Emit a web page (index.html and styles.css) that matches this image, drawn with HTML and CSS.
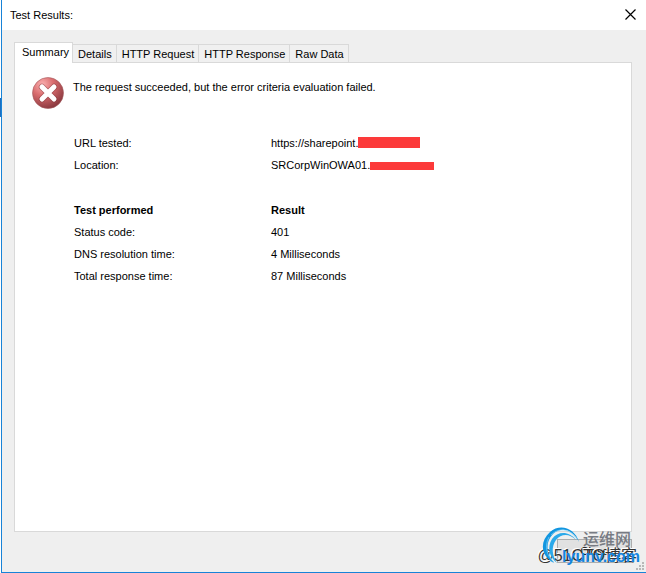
FILE: index.html
```html
<!DOCTYPE html>
<html lang="en">
  <head>
    <meta charset="utf-8">
    <title>Test Results</title>
    <link rel="stylesheet" href="styles.css">
  </head>
  <body>
    <div class="window">
      <div class="title-bar">
        <h1>Test Results:</h1>
        <button class="close-x" aria-label="Close window">
          <svg width="11" height="11" viewBox="0 0 11 11"><path d="M.5 .5l10 10M10.5 .5l-10 10" stroke="#000" stroke-width="1.2"/></svg>
        </button>
      </div>

      <div class="content">
        <div class="tabs" role="tablist">
          <button class="tab active" role="tab" aria-selected="true">Summary</button>
          <button class="tab" role="tab">Details</button>
          <button class="tab" role="tab">HTTP Request</button>
          <button class="tab" role="tab">HTTP Response</button>
          <button class="tab" role="tab">Raw Data</button>
        </div>

        <div class="panel" role="tabpanel">
          <div class="message">
            <svg width="32" height="32" viewBox="0 0 32 32">
              <defs>
                <radialGradient id="ball" cx="32%" cy="22%" r="80%">
                  <stop offset="0" stop-color="#fbb0b0"/>
                  <stop offset=".45" stop-color="#d96c6e"/>
                  <stop offset="1" stop-color="#8c3a40"/>
                </radialGradient>
              </defs>
              <circle cx="16" cy="16" r="15.5" fill="url(#ball)" stroke="#a45a5e" stroke-width=".6"/>
              <path d="M10 10l12 12M22 10l-12 12" stroke="#7d3035" stroke-opacity=".5" stroke-width="6.5" stroke-linecap="round"/>
              <path d="M10 10l12 12M22 10l-12 12" stroke="#fff" stroke-width="5" stroke-linecap="round"/>
            </svg>
            <p>The request succeeded, but the error criteria evaluation failed.</p>
          </div>

          <table class="results">
            <tr><td>URL tested:</td><td>https://sharepoint.<span class="redacted url"></span></td></tr>
            <tr><td>Location:</td><td>SRCorpWinOWA01.<span class="redacted location"></span></td></tr>
            <tr class="heading"><th>Test performed</th><th>Result</th></tr>
            <tr><td>Status code:</td><td>401</td></tr>
            <tr><td>DNS resolution time:</td><td>4 Milliseconds</td></tr>
            <tr><td>Total response time:</td><td>87 Milliseconds</td></tr>
          </table>
        </div>
      </div>

      <div class="footer">
        <button class="close-button">Close</button>
      </div>

      <svg class="grip" width="9" height="9" viewBox="0 0 9 9" fill="#b8b8b8">
        <path d="M6 0h2v2h-2zM3 3h2v2h-2zM6 3h2v2h-2zM0 6h2v2h-2zM3 6h2v2h-2zM6 6h2v2h-2z"/>
      </svg>
      <div class="edge"></div>

      <!-- Site watermarks over the corner -->
      <div class="watermark blog">@51CTO博客</div>
      <svg class="watermark swirl" width="38" height="38" viewBox="0 0 38 38">
        <path d="M37 16C33 2 18-3 8 6C-3 16-1 30 12 37C4 28 3 16 11 8C20 0 31 4 37 16z" fill="#1296e0"/>
        <path d="M34 14C27 5 16 5 10 13C5 21 7 31 15 37C10 29 9 21 14 14C19 8 27 7 34 14z" fill="#2ba9ea"/>
        <path d="M7 11C2 20 5 31 12 36M9 9C18 0 29 4 35 13" fill="none" stroke="#7fd0f5" stroke-width=".7"/>
      </svg>
      <div class="watermark site-name">运维网</div>
      <div class="watermark site-url">lyunv.com</div>
    </div>
  </body>
</html>
```

FILE: styles.css
```css
* {
  box-sizing: border-box;
}

body {
  margin: 0;
  background-color: #fff;
  color: #000;
  font-family: "Liberation Sans", Arial, sans-serif;
  font-size: 11px;
  line-height: 14px;
}

button {
  font: inherit;
  color: inherit;
}

.window {
  position: relative;
  display: flex;
  flex-direction: column;
  min-height: 100vh;
  margin-left: 1px;
  border-left: 1px solid #1883d7;
  border-bottom: 1px solid #1883d7;
  background-color: #efefef;
}

.title-bar {
  display: flex;
  align-items: center;
  justify-content: space-between;
  height: 30px;
  padding: 0 8px;
  background-color: #fff;
}

.title-bar h1 {
  margin: 0;
  font-size: 11px;
  font-weight: normal;
}

.close-x {
  display: flex;
  padding: 1px 2px 3px;
  border: 0;
  background: none;
}

.content {
  display: flex;
  flex: 1;
  flex-direction: column;
  padding: 12px 14px 0 12px;
}

.tabs {
  display: flex;
  align-items: flex-end;
}

.tab {
  height: 18px;
  padding: 0 4px 0 5px;
  border: 1px solid #d9d9d9;
  border-width: 1px 1px 0 0;
  background-color: #f0f0f0;
  white-space: nowrap;
}

.tab.active {
  position: relative;
  height: 21px;
  margin-bottom: -1px;
  padding: 0 3px 2px 7px;
  border-left-width: 1px;
  background-color: #fff;
}

.panel {
  flex: 1;
  padding: 14px 17px;
  border: 1px solid #d9d9d9;
  background-color: #fff;
}

.message {
  display: flex;
  gap: 9px;
}

.message p {
  margin: 3px 0;
}

.results {
  margin: 19px 0 0 42px;
  border-collapse: collapse;
}

.results td,
.results th {
  height: 22px;
  padding: 0;
  text-align: left;
  vertical-align: bottom;
}

.results td:first-child {
  width: 197px;
}

.results .heading th {
  height: 45px;
}

.redacted {
  display: inline-block;
  background-color: #fc3a3a;
}

.redacted.url {
  width: 62px;
  height: 11px;
  vertical-align: text-top;
}

.redacted.location {
  width: 64px;
  height: 8px;
  vertical-align: middle;
}

.footer {
  display: flex;
  justify-content: flex-end;
  padding: 7px 14px 9px;
}

.close-button {
  width: 75px;
  height: 24px;
  border: 1px solid #adadad;
  background-color: #e1e1e1;
}

.grip {
  position: absolute;
  right: 1px;
  bottom: 1px;
}

.edge {
  position: absolute;
  top: 98px;
  left: -2px;
  width: 1px;
  height: 19px;
  background-color: #1c6fc0;
}

.watermark {
  position: absolute;
  white-space: nowrap;
}

.blog {
  right: 9px;
  bottom: 6px;
  color: #333;
  font-family: "Liberation Sans", "Noto Sans CJK SC", sans-serif;
  font-size: 16px;
  line-height: 20px;
  text-shadow: -1px -1px #fff;
}

.swirl {
  right: 66px;
  bottom: 8px;
}

.site-name {
  right: 15px;
  bottom: 25px;
  color: #777b83;
  font-family: "Noto Sans CJK SC", sans-serif;
  font-size: 16px;
  font-weight: 500;
  line-height: 18px;
}

.site-url {
  right: 6px;
  bottom: 6px;
  color: #1485e0;
  font-size: 16px;
  font-weight: bold;
  line-height: 18px;
}
```
